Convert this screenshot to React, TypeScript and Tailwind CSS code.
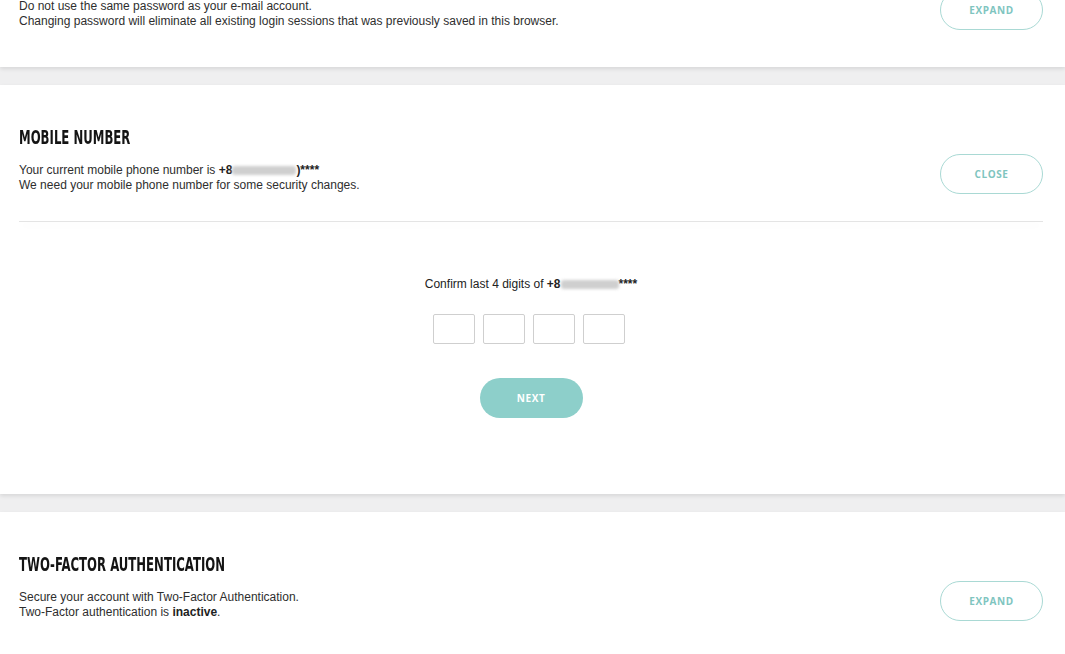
import { ReactNode } from "react";

function Heading({ children }: { children: ReactNode }) {
  return (
    <div className="h-[22px] whitespace-nowrap leading-[22px]">
      <h2 className="inline-block origin-left scale-x-[0.685] align-top text-[19px] leading-[22px] font-bold uppercase text-[#141414] [font-family:'Liberation_Sans_Narrow','DejaVu_Sans_Condensed',sans-serif]">
        {children}
      </h2>
    </div>
  );
}

function Masked({ width }: { width: number }) {
  return (
    <span
      className="inline-block h-[9px] rounded-[3px] bg-[#cfcfcf] align-middle blur-[1.5px]"
      style={{ width }}
    />
  );
}

function PillButton({ children }: { children: ReactNode }) {
  return (
    <button className="h-10 w-[103px] shrink-0 rounded-full border border-[#a9d9d4] bg-white text-[10px] font-bold tracking-[0.06em] text-[#7fc5bf] [font-family:'Open_Sans',sans-serif]">
      {children}
    </button>
  );
}

function Section({
  title,
  lines,
  action,
}: {
  title: string;
  lines: ReactNode[];
  action: string;
}) {
  return (
    <section className="bg-white pl-[19px] pr-[22px] pt-[41px] pb-[37px] shadow-[0_2px_4px_rgba(0,0,0,0.1)]">
      <Heading>{title}</Heading>
      <div className="mt-[6px] flex items-center justify-between">
        <div className="pt-[7px] text-[12px] leading-[15px] text-[#2e2e2e]">
          {lines.map((l, i) => (
            <p key={i}>{l}</p>
          ))}
        </div>
        <PillButton>{action}</PillButton>
      </div>
    </section>
  );
}

export default function App() {
  return (
    <div className="h-[654px] overflow-hidden bg-[#efeff0] [font-family:'Liberation_Sans',Arial,sans-serif]">
      <div className="-mt-[79px] flex flex-col gap-[18px]">
        <Section
          title="Password"
          action="EXPAND"
          lines={[
            "Do not use the same password as your e-mail account.",
            "Changing password will eliminate all existing login sessions that was previously saved in this browser.",
          ]}
        />

        <section className="bg-white pl-[19px] pr-[22px] pt-[41px] pb-[76px] shadow-[0_2px_4px_rgba(0,0,0,0.1)]">
          <Heading>Mobile Number</Heading>
          <div className="mt-[6px] flex items-center justify-between">
            <div className="pt-[7px] text-[12px] leading-[15px] text-[#2e2e2e]">
              <p>
                Your current mobile phone number is{" "}
                <b className="text-[#222]">
                  +8<Masked width={64} />)****
                </b>
              </p>
              <p>We need your mobile phone number for some security changes.</p>
            </div>
            <PillButton>CLOSE</PillButton>
          </div>

          <div className="mt-[27px] h-px bg-[#e4e4e4] shadow-[0_4px_8px_rgba(0,0,0,0.05)]" />

          <div className="flex flex-col items-center pt-[55px]">
            <p className="text-[12px] leading-[15px] text-[#222]">
              Confirm last 4 digits of{" "}
              <b>
                +8<Masked width={58} />****
              </b>
            </p>
            <div className="mt-[22px] mr-[5px] flex gap-[8px]">
              {[0, 1, 2, 3].map((i) => (
                <input
                  key={i}
                  maxLength={1}
                  className="h-[30px] w-[42px] rounded-[2px] border border-[#cfcfcf] text-center text-sm outline-none"
                />
              ))}
            </div>
            <button className="mt-[34px] h-10 w-[103px] rounded-full bg-[#8dcfca] text-[10px] font-bold tracking-[0.06em] text-white [font-family:'Open_Sans',sans-serif]">
              NEXT
            </button>
          </div>
        </section>

        <Section
          title="Two-Factor Authentication"
          action="EXPAND"
          lines={[
            "Secure your account with Two-Factor Authentication.",
            <>
              Two-Factor authentication is <b className="text-[#222]">inactive</b>.
            </>,
          ]}
        />
      </div>
    </div>
  );
}
